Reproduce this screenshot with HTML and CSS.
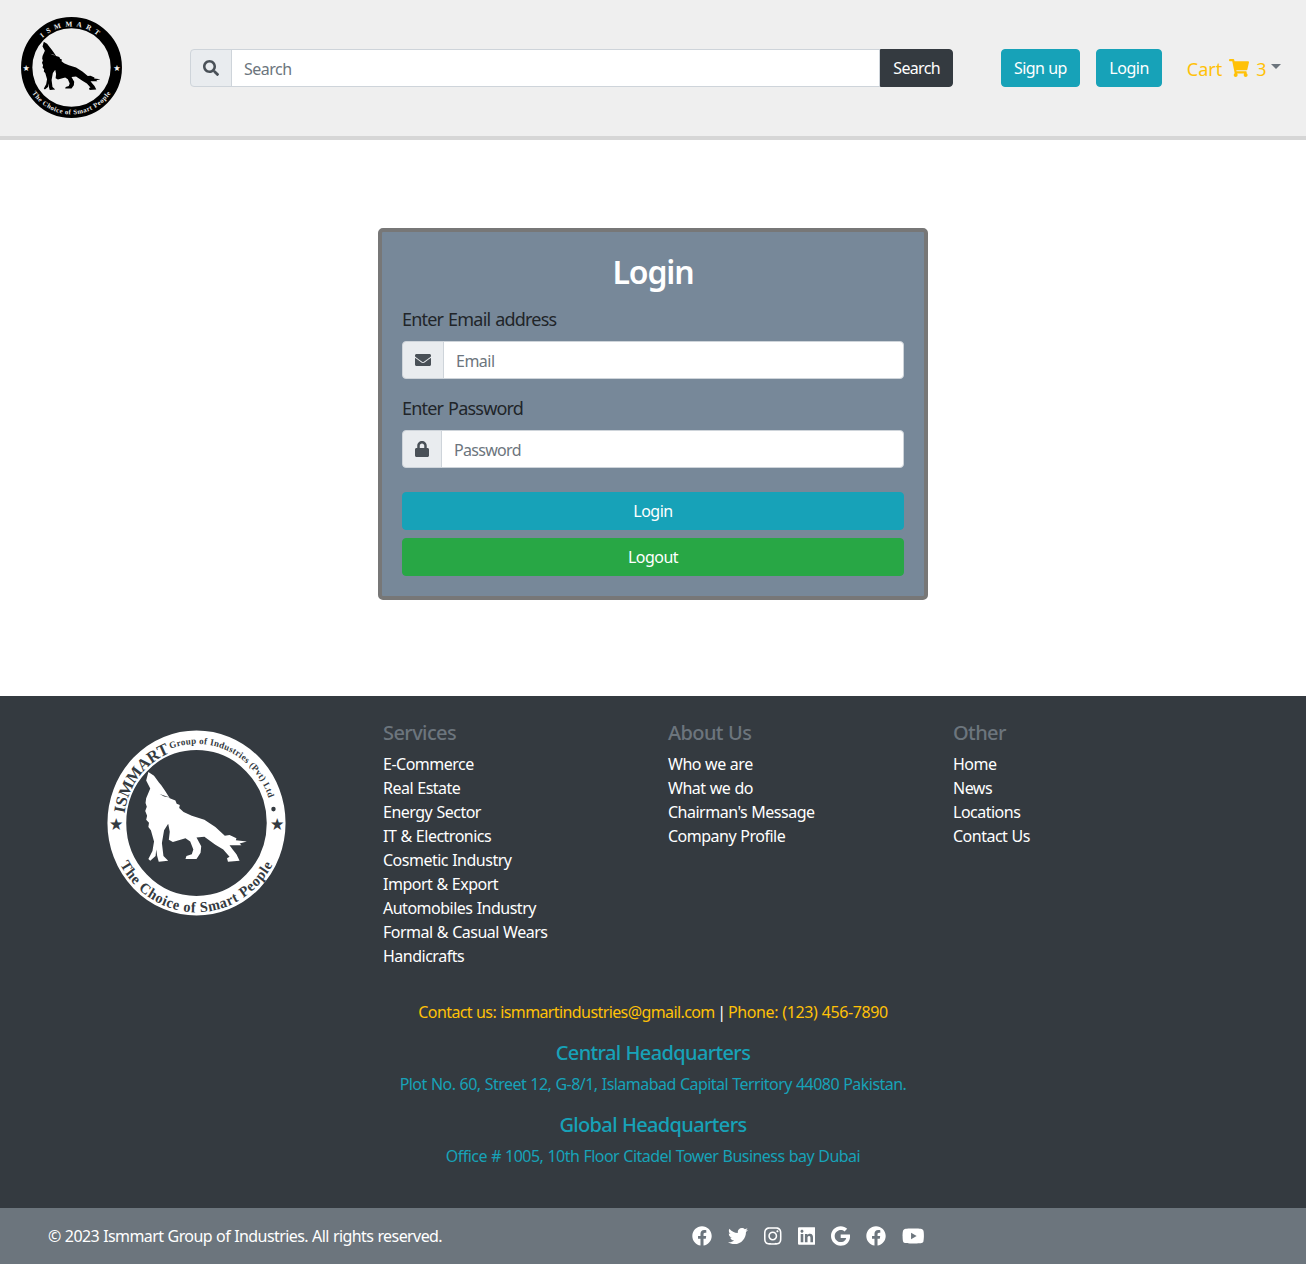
FILE: index.html
```html
<!DOCTYPE html>
<html lang="en">
<head>
    <meta charset="UTF-8">
    <title>Login - Ismmart</title>
    <link rel="stylesheet" href="styles.css">
</head>
<body>
    <svg class="defs" width="0" height="0" aria-hidden="true">
        <defs>
            <symbol id="wolf" viewBox="160 160 330 290" preserveAspectRatio="none">
                <path d="M172 163L190 175L205 195L213 205L225 222L240 245L258 252L262 262L272 266L270 276L284 288L310 300L350 312L385 335L415 362L430 360L452 370L450 376L485 380L462 386L468 392L445 392L430 392L440 405L452 420L462 440L425 443L422 432L430 428L410 405L385 390L350 365L325 368L340 395L338 415L325 435L290 435L293 425L310 420L315 405L305 380L290 370L250 382L237 375L240 350L235 325L222 345L215 385L220 425L235 440L205 443L200 425L197 405L195 425L178 440L172 435L185 410L190 380L180 345L172 335L174 322L165 312L168 300L162 285L167 272L163 260L165 245L178 215L165 190Z"/>
                <path class="wolf-mark" d="M208 232L240 243L222 240Z"/>
            </symbol>
            <path id="seal-top" d="M100 181A81 81 0 1 1 100.01 181"/>
            <path id="seal-small" d="M100 185A85 85 0 1 1 100.01 185"/>
            <path id="seal-bottom" d="M4 100A96 96 0 0 0 196 100"/>
            <path id="brand-top" d="M20 100A80 80 0 0 1 180 100"/>
            <path id="brand-bottom" d="M9 100A91 91 0 0 0 191 100"/>
        </defs>
    </svg>

    <header class="site-header">
        <a class="brand" href="#">
            <svg class="brand-logo" viewBox="0 0 200 200">
                <circle cx="100" cy="100" r="87" class="ring"/>
                <use href="#wolf" x="42" y="49" width="116" height="97"/>
                <text class="brand-name"><textPath href="#brand-top" startOffset="50%">ISMMART</textPath></text>
                <text class="brand-tag"><textPath href="#brand-bottom" startOffset="50%">The Choice of Smart People</textPath></text>
                <text class="brand-star" x="12" y="106">★</text>
                <text class="brand-star" x="188" y="106">★</text>
            </svg>
        </a>

        <form class="input-group search">
            <span class="addon">
                <svg class="icon" viewBox="0 0 512 512"><path d="M505 442.7L405.3 343c-4.5-4.5-10.6-7-17-7H372c27.6-35.3 44-79.7 44-128C416 93.1 322.9 0 208 0S0 93.1 0 208s93.1 208 208 208c48.3 0 92.7-16.4 128-44v16.3c0 6.4 2.5 12.5 7 17l99.7 99.7c9.4 9.4 24.6 9.4 33.9 0l28.3-28.3c9.4-9.4 9.4-24.6.1-34zM208 336c-70.7 0-128-57.2-128-128 0-70.7 57.2-128 128-128 70.7 0 128 57.2 128 128 0 70.7-57.2 128-128 128z"/></svg>
            </span>
            <input type="text" placeholder="Search">
            <button type="button" class="btn btn-dark">Search</button>
        </form>

        <a class="btn btn-info signup" href="#">Sign up</a>
        <a class="btn btn-info login" href="#">Login</a>

        <a class="cart" href="#">
            Cart
            <svg class="cart-icon" viewBox="0 0 576 512"><path d="M528.12 301.319l47.273-208C578.806 78.301 567.391 64 551.99 64H159.208l-9.166-44.81C147.758 8.021 137.93 0 126.529 0H24C10.745 0 0 10.745 0 24v16c0 13.255 10.745 24 24 24h69.883l70.248 343.435C147.325 417.1 136 435.222 136 456c0 30.928 25.072 56 56 56s56-25.072 56-56c0-15.674-6.447-29.835-16.824-40h209.647C430.447 426.165 424 440.326 424 456c0 30.928 25.072 56 56 56s56-25.072 56-56c0-22.172-12.888-41.332-31.579-50.405l5.517-24.276c3.413-15.018-8.002-29.319-23.403-29.319H218.117l-6.545-32h293.145c11.206 0 20.92-7.754 23.403-18.681z"/></svg>
            3
            <span class="caret"></span>
        </a>
    </header>

    <main class="site-main">
        <form class="login-card">
            <h2>Login</h2>
            <div class="form-group">
                <label for="email">Enter Email address</label>
                <div class="input-group">
                    <span class="addon">
                        <svg class="icon" viewBox="0 0 512 512"><path d="M502.3 190.8c3.9-3.1 9.7-.2 9.7 4.7V400c0 26.5-21.5 48-48 48H48c-26.5 0-48-21.5-48-48V195.6c0-5 5.7-7.8 9.7-4.7 22.4 17.4 52.1 39.5 154.1 113.6 21.1 15.4 56.7 47.8 92.2 47.6 35.7.3 72-32.8 92.3-47.6 102-74.1 131.6-96.3 154-113.7zM256 320c23.2.4 56.6-29.2 73.4-41.4 132.7-96.3 142.8-104.7 173.4-128.7 5.8-4.5 9.2-11.5 9.2-18.9v-19c0-26.5-21.5-48-48-48H48C21.5 64 0 85.5 0 112v19c0 7.4 3.4 14.3 9.2 18.9 30.6 23.9 40.7 32.4 173.4 128.7 16.8 12.2 50.2 41.8 73.4 41.4z"/></svg>
                    </span>
                    <input type="email" id="email" placeholder="Email">
                </div>
            </div>
            <div class="form-group password-group">
                <label for="password">Enter Password</label>
                <div class="input-group">
                    <span class="addon">
                        <svg class="icon icon-lock" viewBox="0 0 448 512"><path d="M400 224h-24v-72C376 68.2 307.8 0 224 0S72 68.2 72 152v72H48c-26.5 0-48 21.5-48 48v192c0 26.5 21.5 48 48 48h352c26.5 0 48-21.5 48-48V272c0-26.5-21.5-48-48-48zm-104 0H152v-72c0-39.7 32.3-72 72-72s72 32.3 72 72v72z"/></svg>
                    </span>
                    <input type="password" id="password" placeholder="Password">
                </div>
            </div>
            <button type="button" class="btn btn-info btn-block">Login</button>
            <button type="button" class="btn btn-success btn-block">Logout</button>
        </form>
    </main>

    <footer class="site-footer">
        <div class="footer-columns">
            <div class="footer-logo">
                <svg viewBox="0 0 200 200" preserveAspectRatio="none">
                    <circle cx="100" cy="100" r="89" class="seal-ring"/>
                    <use href="#wolf" class="seal-wolf" x="42" y="44" width="116" height="100"/>
                    <text class="seal-name"><textPath href="#seal-top" startOffset="35.5%">ISMMART</textPath></text>
                    <text class="seal-group"><textPath href="#seal-small" startOffset="44.4%">Group of Industries (Pvt) Ltd</textPath></text>
                    <circle cx="186" cy="85" r="2.5" class="seal-dot"/>
                    <text class="seal-tag"><textPath href="#seal-bottom" startOffset="50%">The Choice of Smart People</textPath></text>
                    <text class="seal-star" x="10" y="108">★</text>
                    <text class="seal-star" x="190" y="108">★</text>
                </svg>
            </div>
            <div class="footer-col">
                <h5>Services</h5>
                <ul>
                    <li><a href="#">E-Commerce</a></li>
                    <li><a href="#">Real Estate</a></li>
                    <li><a href="#">Energy Sector</a></li>
                    <li><a href="#">IT &amp; Electronics</a></li>
                    <li><a href="#">Cosmetic Industry</a></li>
                    <li><a href="#">Import &amp; Export</a></li>
                    <li><a href="#">Automobiles Industry</a></li>
                    <li><a href="#">Formal &amp; Casual Wears</a></li>
                    <li><a href="#">Handicrafts</a></li>
                </ul>
            </div>
            <div class="footer-col">
                <h5>About Us</h5>
                <ul>
                    <li><a href="#">Who we are</a></li>
                    <li><a href="#">What we do</a></li>
                    <li><a href="#">Chairman's Message</a></li>
                    <li><a href="#">Company Profile</a></li>
                </ul>
            </div>
            <div class="footer-col">
                <h5>Other</h5>
                <ul>
                    <li><a href="#">Home</a></li>
                    <li><a href="#">News</a></li>
                    <li><a href="#">Locations</a></li>
                    <li><a href="#">Contact Us</a></li>
                </ul>
            </div>
        </div>

        <div class="footer-contact">
            <p class="contact-line"><span>Contact us: ismmartindustries@gmail.com</span> | <span class="phone">Phone: (123) 456-7890</span></p>
            <h5>Central Headquarters</h5>
            <p>Plot No. 60, Street 12, G-8/1, Islamabad Capital Territory 44080 Pakistan.</p>
            <h5>Global Headquarters</h5>
            <p>Office # 1005, 10th Floor Citadel Tower Business bay Dubai</p>
        </div>
    </footer>

    <div class="copyright">
        <span class="copyright-text">© 2023 Ismmart Group of Industries. All rights reserved.</span>
        <div class="social">
            <a href="#"><svg viewBox="0 0 512 512"><path d="M504 256C504 119 393 8 256 8S8 119 8 256c0 123.78 90.69 226.38 209.25 245V327.69h-63V256h63v-54.64c0-62.15 37-96.48 93.67-96.48 27.14 0 55.52 4.84 55.52 4.84v61h-31.28c-30.8 0-40.41 19.12-40.41 38.73V256h68.78l-11 71.69h-57.78V501C413.31 482.38 504 379.78 504 256z"/></svg></a>
            <a href="#"><svg viewBox="0 0 512 512"><path d="M459.37 151.716c.325 4.548.325 9.097.325 13.645 0 138.72-105.583 298.558-298.558 298.558-59.452 0-114.68-17.219-161.137-47.106 8.447.974 16.568 1.299 25.34 1.299 49.055 0 94.213-16.568 130.274-44.832-46.132-.975-84.792-31.188-98.112-72.772 6.498.974 12.995 1.624 19.818 1.624 9.421 0 18.843-1.3 27.614-3.573-48.081-9.747-84.143-51.98-84.143-102.985v-1.299c13.969 7.797 30.214 12.67 47.431 13.319-28.264-18.843-46.781-51.005-46.781-87.391 0-19.492 5.197-37.36 14.294-52.954 51.655 63.675 129.3 105.258 216.365 109.807-1.624-7.797-2.599-15.918-2.599-24.04 0-57.828 46.782-104.934 104.934-104.934 30.213 0 57.502 12.67 76.67 33.137 23.715-4.548 46.456-13.32 66.599-25.34-7.798 24.366-24.366 44.833-46.132 57.827 21.117-2.273 41.584-8.122 60.426-16.243-14.292 20.791-32.161 39.308-52.628 54.253z"/></svg></a>
            <a href="#"><svg viewBox="0 0 448 512"><path d="M224.1 141c-63.6 0-114.9 51.3-114.9 114.9s51.3 114.9 114.9 114.9S339 319.5 339 255.9 287.7 141 224.1 141zm0 189.6c-41.1 0-74.7-33.5-74.7-74.7s33.5-74.7 74.7-74.7 74.7 33.5 74.7 74.7-33.6 74.7-74.7 74.7zm146.4-194.3c0 14.9-12 26.8-26.8 26.8-14.9 0-26.8-12-26.8-26.8s12-26.8 26.8-26.8 26.8 12 26.8 26.8zm76.1 27.2c-1.7-35.9-9.9-67.7-36.2-93.9-26.2-26.2-58-34.4-93.9-36.2-37-2.1-147.9-2.1-184.9 0-35.8 1.7-67.6 9.9-93.9 36.1s-34.4 58-36.2 93.9c-2.1 37-2.1 147.9 0 184.9 1.7 35.9 9.9 67.7 36.2 93.9s58 34.4 93.9 36.2c37 2.1 147.9 2.1 184.9 0 35.9-1.7 67.7-9.9 93.9-36.2 26.2-26.2 34.4-58 36.2-93.9 2.1-37 2.1-147.8 0-184.8zM398.8 388c-7.8 19.6-22.9 34.7-42.6 42.6-29.5 11.7-99.5 9-132.1 9s-102.7 2.6-132.1-9c-19.6-7.8-34.7-22.9-42.6-42.6-11.7-29.5-9-99.5-9-132.1s-2.6-102.7 9-132.1c7.8-19.6 22.9-34.7 42.6-42.6 29.5-11.7 99.5-9 132.1-9s102.7-2.6 132.1 9c19.6 7.8 34.7 22.9 42.6 42.6 11.7 29.5 9 99.5 9 132.1s2.7 102.7-9 132.1z"/></svg></a>
            <a href="#"><svg viewBox="0 0 448 512"><path d="M416 32H31.9C14.3 32 0 46.5 0 64.3v383.4C0 465.5 14.3 480 31.9 480H416c17.6 0 32-14.5 32-32.3V64.3c0-17.8-14.4-32.3-32-32.3zM135.4 416H69V202.2h66.5V416zm-33.2-243c-21.3 0-38.5-17.3-38.5-38.5S80.9 96 102.2 96c21.2 0 38.5 17.3 38.5 38.5 0 21.3-17.2 38.5-38.5 38.5zm282.1 243h-66.4V312c0-24.8-.5-56.7-34.5-56.7-34.6 0-39.9 27-39.9 54.9V416h-66.4V202.2h63.7v29.2h.9c8.9-16.8 30.6-34.5 62.9-34.5 67.2 0 79.7 44.3 79.7 101.9V416z"/></svg></a>
            <a href="#"><svg viewBox="0 0 488 512"><path d="M488 261.8C488 403.3 391.1 504 248 504 110.8 504 0 393.2 0 256S110.8 8 248 8c66.8 0 123 24.5 166.3 64.9l-67.5 64.9C258.5 52.6 94.3 116.6 94.3 256c0 86.5 69.1 156.6 153.7 156.6 98.2 0 135-70.4 140.8-106.9H248v-85.3h236.1c2.3 12.7 3.9 24.9 3.9 41.4z"/></svg></a>
            <a href="#"><svg viewBox="0 0 512 512"><path d="M504 256C504 119 393 8 256 8S8 119 8 256c0 123.78 90.69 226.38 209.25 245V327.69h-63V256h63v-54.64c0-62.15 37-96.48 93.67-96.48 27.14 0 55.52 4.84 55.52 4.84v61h-31.28c-30.8 0-40.41 19.12-40.41 38.73V256h68.78l-11 71.69h-57.78V501C413.31 482.38 504 379.78 504 256z"/></svg></a>
            <a href="#"><svg viewBox="0 0 576 512"><path d="M549.655 124.083c-6.281-23.65-24.787-42.276-48.284-48.597C458.781 64 288 64 288 64S117.22 64 74.629 75.486c-23.497 6.322-42.003 24.947-48.284 48.597-11.412 42.867-11.412 132.305-11.412 132.305s0 89.438 11.412 132.305c6.281 23.65 24.787 41.5 48.284 47.821C117.22 448 288 448 288 448s170.78 0 213.371-11.486c23.497-6.321 42.003-24.171 48.284-47.821 11.412-42.867 11.412-132.305 11.412-132.305s0-89.438-11.412-132.305zm-317.51 213.508V175.185l142.739 81.205-142.739 81.201z"/></svg></a>
        </div>
    </div>
</body>
</html>
```

FILE: styles.css
```css
* {
    box-sizing: border-box;
}

body {
    margin: 0;
    font-family: "Noto Sans", "Open Sans", Arial, sans-serif;
    font-size: 16px;
    line-height: 1.5;
    letter-spacing: -0.5px;
    word-spacing: 0.5px;
    color: #212529;
    background-color: white;
}

a {
    text-decoration: none;
}

.defs {
    position: absolute;
}

.wolf-mark {
    fill: currentColor;
}

/* header */
.site-header {
    display: flex;
    align-items: center;
    height: 140px;
    padding-left: 20px;
    background-color: #efefef;
    border-bottom: 4px solid #d6d6d6;
}

.brand {
    display: flex;
    margin-bottom: 2px;
}

.brand-logo {
    width: 103px;
    height: 103px;
    color: #efefef;
}

.ring {
    fill: none;
    stroke: #000;
    stroke-width: 22px;
}

.brand-name {
    font: bold 14px "Liberation Serif", serif;
    letter-spacing: 8px;
    word-spacing: 0;
    fill: #efefef;
    text-anchor: middle;
}

.brand-tag {
    font: bold 13px "Liberation Serif", serif;
    letter-spacing: 1px;
    word-spacing: 0;
    fill: #efefef;
    text-anchor: middle;
}

.brand-star {
    font: 16px "DejaVu Sans", sans-serif;
    fill: #efefef;
    text-anchor: middle;
}

.input-group {
    display: flex;
    height: 38px;
}

.search {
    width: 763px;
    margin-left: 67px;
}

.addon {
    display: flex;
    align-items: center;
    padding: 0 12px;
    background-color: #e9ecef;
    border: 1px solid #ced4da;
    border-radius: 4px 0 0 4px;
}

.icon {
    display: block;
    width: 16px;
    height: 16px;
    fill: #495057;
}

.icon-lock {
    width: 14px;
}

.input-group input {
    flex: 1;
    min-width: 0;
    padding: 7px 12px 5px;
    margin-left: -1px;
    font: inherit;
    letter-spacing: inherit;
    word-spacing: inherit;
    color: #495057;
    background-color: white;
    border: 1px solid #ced4da;
    border-radius: 0 4px 4px 0;
    outline: none;
}

.input-group input::placeholder {
    color: #6c757d;
    opacity: 1;
}

.search input {
    border-radius: 0;
}

.btn {
    display: inline-block;
    padding: 6px 12px;
    font: inherit;
    letter-spacing: inherit;
    word-spacing: inherit;
    color: white;
    text-align: center;
    border: 1px solid transparent;
    border-radius: 4px;
    cursor: pointer;
}

.btn-dark {
    letter-spacing: -0.65px;
    background-color: #343a40;
    border-color: #343a40;
    border-radius: 0 4px 4px 0;
}

.btn-info {
    background-color: #17a2b8;
    border-color: #17a2b8;
}

.btn-success {
    background-color: #28a745;
    border-color: #28a745;
}

.btn-block {
    display: block;
    width: 100%;
}

.btn-block + .btn-block {
    margin-top: 8px;
}

.signup {
    margin-left: 48px;
    letter-spacing: -0.6px;
}

.login {
    margin-left: 16.5px;
}

.cart {
    display: flex;
    align-items: center;
    gap: 7px;
    margin-left: 25px;
    padding-top: 2px;
    font-size: 18px;
    letter-spacing: 0;
    color: #ffc107;
}

.cart-icon {
    width: 20px;
    height: 18px;
    margin-bottom: 2px;
    fill: #ffc107;
}

.caret {
    width: 0;
    height: 0;
    margin-bottom: 5px;
    margin-left: -2px;
    border-top: 5px solid #6c757d;
    border-left: 5px solid transparent;
    border-right: 5px solid transparent;
}

/* login box */
.site-main {
    padding: 88px 0 96px;
}

.login-card {
    width: 550px;
    margin: 0 auto;
    padding: 20px;
    background-color: lightslategray;
    border: 4px solid #777;
    border-radius: 5px;
}

.login-card h2 {
    margin: 0 0 15px;
    padding-top: 1px;
    font-size: 32px;
    font-weight: 600;
    line-height: 1.2;
    letter-spacing: -1.1px;
    color: white;
    text-align: center;
}

.form-group {
    margin-bottom: 16px;
}

.password-group {
    margin-bottom: 24px;
}

.form-group label {
    display: block;
    margin-bottom: 8px;
    font-size: 18px;
    letter-spacing: -0.8px;
    word-spacing: 1px;
}

.password-group input {
    letter-spacing: -0.7px;
}

/* footer */
.site-footer {
    padding: 25px 0 40px;
    color: white;
    background-color: #343a40;
}

.footer-columns {
    display: grid;
    grid-template-columns: repeat(4, 285px);
    width: 1140px;
    margin: 0 auto;
    padding-left: 15px;
}

.footer-logo {
    padding: 9px 0 0 9px;
    color: #343a40;
}

.footer-logo svg {
    display: block;
    width: 179px;
    height: 186px;
}

.seal-ring {
    fill: none;
    stroke: white;
    stroke-width: 21px;
}

.seal-wolf {
    fill: white;
}

.seal-name {
    font: bold 18px "Liberation Serif", serif;
    letter-spacing: -0.3px;
    word-spacing: 0;
    fill: #343a40;
    text-anchor: middle;
}

.seal-group {
    font: bold 10px "Liberation Serif", serif;
    letter-spacing: 0.35px;
    word-spacing: 0;
    fill: #343a40;
}

.seal-dot {
    fill: #343a40;
}

.seal-tag {
    font: bold 16px "Liberation Serif", serif;
    letter-spacing: 0.7px;
    word-spacing: 0;
    fill: #343a40;
    text-anchor: middle;
}

.seal-star {
    font: 18px "DejaVu Sans", sans-serif;
    fill: #343a40;
    text-anchor: middle;
}

.footer-col h5 {
    margin: 0 0 7px;
    font-size: 20px;
    font-weight: 500;
    line-height: 24px;
    letter-spacing: -0.6px;
    color: #6c757d;
}

.footer-col ul {
    margin: 0;
    padding: 0;
    list-style: none;
}

.footer-col a {
    color: white;
}

.footer-contact {
    margin-top: 32px;
    color: #17a2b8;
    text-align: center;
}

.footer-contact h5 {
    margin: 0 0 7px;
    font-size: 20px;
    font-weight: 500;
    line-height: 24px;
    letter-spacing: -0.65px;
}

.footer-contact p {
    margin: 0 0 17px;
    letter-spacing: -0.53px;
}

.footer-contact p:last-child {
    margin-bottom: 0;
}

.footer-contact .contact-line {
    letter-spacing: -0.6px;
    word-spacing: -1px;
    color: white;
}

.contact-line span {
    word-spacing: 0.5px;
    color: #ffc107;
}

.contact-line .phone {
    letter-spacing: -0.4px;
}

.copyright {
    display: flex;
    align-items: center;
    height: 56px;
    padding-left: 48px;
    color: white;
    background-color: #6c757d;
}

.copyright-text {
    flex: 0 0 644px;
    letter-spacing: -0.58px;
}

.social {
    display: flex;
    align-items: center;
    gap: 16px;
}

.social a {
    display: flex;
}

.social svg {
    height: 20px;
    fill: white;
}
```
